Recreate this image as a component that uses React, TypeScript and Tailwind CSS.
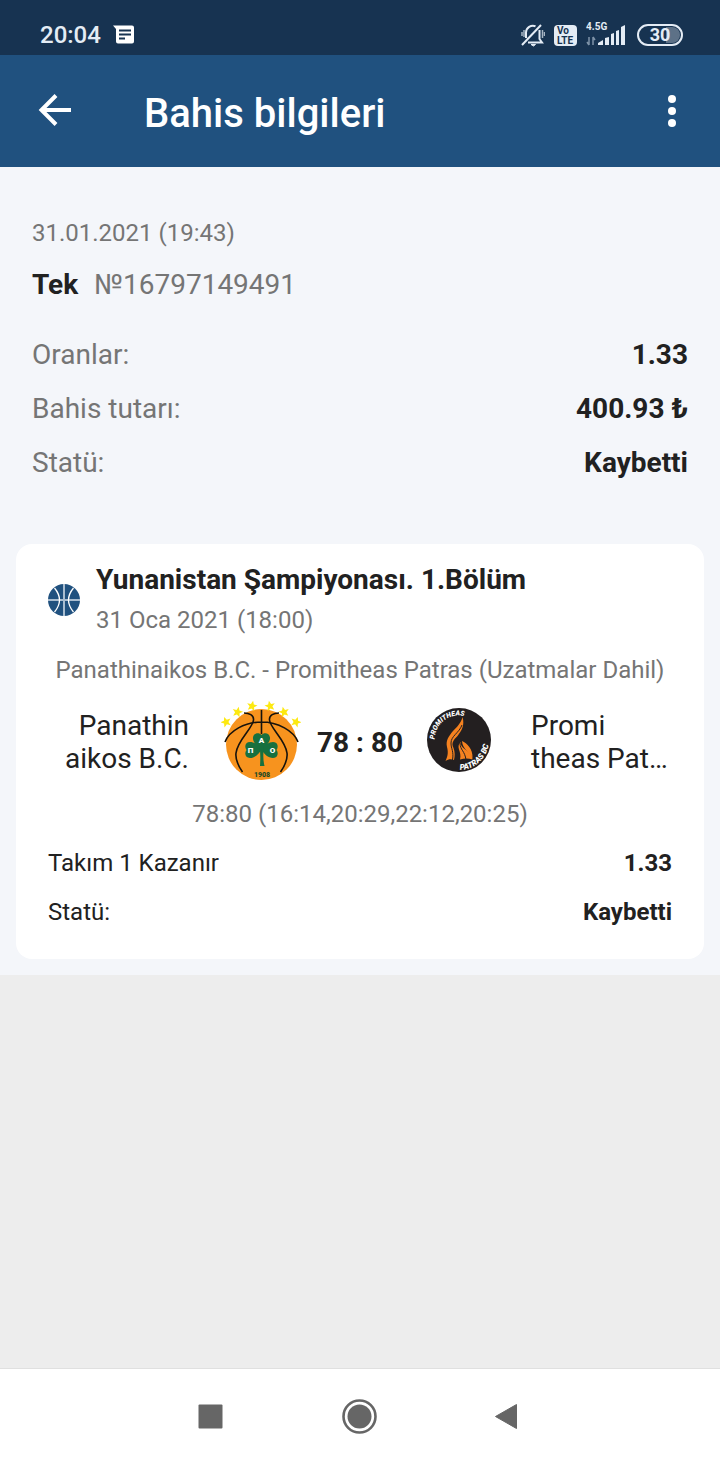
import type { ReactNode } from "react";

const details = [
  { label: "Oranlar:", value: "1.33" },
  { label: "Bahis tutarı:", value: "400.93 ₺" },
  { label: "Statü:", value: "Kaybetti" },
];

const outcome = [
  { label: "Takım 1 Kazanır", value: "1.33" },
  { label: "Statü:", value: "Kaybetti" },
];

const STAR = "M0-5.4 1.5-1.8 5.3-1.7 2.3.8 3.3 4.6 0 2.5-3.3 4.6-2.3.8-5.3-1.7-1.5-1.8Z";

const stars = [
  { x: 5, y: 22, tilt: -20 },
  { x: 16.5, y: 12, tilt: 14 },
  { x: 31, y: 6, tilt: 12 },
  { x: 49, y: 6, tilt: -12 },
  { x: 63, y: 12, tilt: -14 },
  { x: 75, y: 22, tilt: 20 },
];

function StatusBar() {
  return (
    <div className="flex h-[55px] items-center bg-[#173351] pt-3.5 pr-[37px] pl-10 text-[#e4ecf5]">
      <span className="text-2xl leading-7 font-medium">20:04</span>
      <svg className="ml-3 h-6 w-6" viewBox="0 0 24 24" fill="none">
        <path d="M0 2.500h19a2 2 0 0 1 2 2v14a2 2 0 0 1-2 2H5a2 2 0 0 1-2-2V6Z" fill="#fff" />
        <path d="M6 7.500h12M6 11.500h12M6 15.500h6" stroke="#173351" strokeWidth="2" />
      </svg>

      <div className="ml-auto flex items-center">
        <svg className="h-6 w-6" viewBox="0 0 24 24" fill="none" stroke="currentColor" strokeWidth="2">
          <path d="M5 15V9.500a7 7 0 0 1 9.500-6.300M18.500 7v9l2.500 3.500H7" />
          <path d="M1 22 20 2" />
          <path d="M1 9v4M3 7v7M21.500 7v8M23.500 9v4" strokeWidth="1.500" opacity=".7" />
          <path d="M10 21.500h4.500l-2 1.500Z" fill="currentColor" strokeWidth="1" />
        </svg>
        <svg className="ml-2 h-6 w-6" viewBox="0 0 24 24">
          <rect x="1" y="2" width="23" height="21" rx="4" fill="currentColor" />
          <g fill="#173351" fontWeight="700" fontSize="10">
            <text x="4" y="11">Vo</text>
            <text x="4" y="21">LTE</text>
          </g>
        </svg>
        <svg className="ml-2 h-7 w-11" viewBox="0 0 44 28" fill="currentColor">
          <text x="1" y="9" fontSize="10" fontWeight="700">4.5G</text>
          <path d="M4 16v8M4 24l-2-3M8 24v-8M8 16l2 3" fill="none" stroke="#7f93a8" strokeWidth="1.500" />
          <path d="M13 24v-2l5-3v5ZM20 24v-7l4-1v8ZM26 24V13l3-1v12ZM31 24V10l3-1v15ZM36 24V6l4-2v20Z" />
        </svg>
        <div className="ml-2 flex h-[22px] w-[46px] items-center justify-center rounded-full border-2 border-[#e4ecf5] bg-linear-to-r from-transparent from-65% to-[#5d7187] to-65% bg-clip-content p-px text-lg leading-5 font-bold">
          30
        </div>
      </div>
    </div>
  );
}

function Header() {
  return (
    <header className="flex h-28 items-center bg-[#20517f] px-6 text-white">
      <button type="button" aria-label="Geri" className="flex h-16 w-16 items-center justify-center">
        <svg className="h-12 w-12" viewBox="0 0 48 48" fill="none" stroke="currentColor" strokeWidth="4">
          <path d="M39 23H9.500M24 8.500 9.500 23 24 37.500" />
        </svg>
      </button>
      <h1 className="ml-14 pt-1.5 text-[40px] leading-12 font-medium">Bahis bilgileri</h1>
      <button type="button" aria-label="Menü" className="-mr-2 ml-auto flex h-16 w-16 items-center justify-center">
        <svg className="h-12 w-12" viewBox="0 0 48 48" fill="currentColor">
          <circle cx="24" cy="12" r="4" />
          <circle cx="24" cy="24" r="4" />
          <circle cx="24" cy="36" r="4" />
        </svg>
      </button>
    </header>
  );
}

function BasketballIcon() {
  return (
    <svg className="h-8 w-8 shrink-0" viewBox="0 0 32 32" fill="none">
      <circle cx="16" cy="16" r="16" fill="#20517f" />
      <path d="M16 0v32M0 16h32" stroke="#a9bdd0" strokeWidth="2" />
      <path d="M6.500 4q10 12 0 24M25.500 4q-10 12 0 24" stroke="#fff" strokeWidth="1.300" />
    </svg>
  );
}

function PanathinaikosLogo() {
  return (
    <svg className="h-20 w-20 shrink-0" viewBox="0 0 80 80" role="img" aria-label="Panathinaikos B.C.">
      <circle cx="40.500" cy="44.500" r="35.500" fill="#f7931e" />
      <g fill="none" stroke="#17130d" strokeWidth="1.600">
        <path d="M40.500 10V34M4 42C8 31 24 22 40.500 22S73 31 77 42" />
        <path d="M23 13c5 0 10 2 9.500 7-.5 8-16 20-17.500 33-1 8 3 14 6.500 19" />
        <path d="M58 13c-5 0-10 2-9.500 7 .5 8 16 20 17.500 33 1 8-3 14-6.500 19" />
      </g>
      <g fill="#17703f">
        <path d="M40.500 50C36 46 31.500 42 32 37.500c.5-4.500 6-5.500 8.500-2.500 2.500-3 8-2 8.500 2.500.5 4.500-4 8.500-8.500 12.500Z" />
        <path d="M41 49c-3 5-7 9-12 9-4.500 0-6-4.500-3.500-8-2.500-3.500-1-8 3.500-8 4 0 9 3 12 7Z" />
        <path d="M40 49c3 5 7 9 12 9 4.500 0 6-4.500 3.500-8 2.500-3.500 1-8-3.500-8-4 0-9 3-12 7Z" />
        <path d="M38.500 46h4.500c-1 8-1 14 .5 20H39c.5-7 .5-13-.5-20Z" />
      </g>
      <g fill="#fff" fontSize="8" fontWeight="900" textAnchor="middle">
        <text x="40.500" y="43">A</text>
        <text x="29.500" y="53">Π</text>
        <text x="51.500" y="53">O</text>
      </g>
      <text x="41" y="77" fill="#1d4a24" fontSize="7" fontWeight="900" textAnchor="middle">1908</text>
      {stars.map((s) => (
        <path key={s.x} d={STAR} transform={`translate(${s.x} ${s.y}) rotate(${s.tilt})`} fill="#fde910" />
      ))}
    </svg>
  );
}

function PromitheasLogo() {
  return (
    <svg className="h-20 w-20 shrink-0" viewBox="0 0 80 80" role="img" aria-label="Promitheas Patras B.C.">
      <circle cx="40" cy="40" r="32" fill="#231f20" />
      <g fill="#f58220">
        <path d="M43.500 17c2.500 8-1 14-5 19-4 4-6.500 7-4 12 1.500 4 1.500 8 .5 12-3-1-5.500-1-8.500 1 3-6 2.500-10 1.500-14-1.500-7 2-11 6-16 4-4 8-8 9.500-14Z" />
        <path d="M42 42c-1 3 1 5 5 8 4 2.500 6.500 5 6.500 9.500-4-1.500-8-1.500-12.500 0 1-4 0-7-1-10s-.5-6 2-7.500Z" />
        <path d="M43 41c5 2 11 8 10.500 17-2-6-10-8-10.500-17Z" />
      </g>
      <g fill="none" stroke="#231f20">
        <path d="M43 25c-3 8-11 11-11 18 0 6 3 8 1.500 17" />
        <path d="M41 43c0 7 5 8 6 17" />
      </g>
      <path id="crest-top" d="M15.500 39.500A24.500 24.500 0 0 1 47 16.500" fill="none" />
      <path id="crest-bottom" d="M41 70A30 30 0 0 0 70 41" fill="none" />
      <g fill="#fff" fontWeight="900" fontStyle="italic">
        <text fontSize="7">
          <textPath href="#crest-top">PROMITHEAS</textPath>
        </text>
        <text fontSize="8">
          <textPath href="#crest-bottom">PATRAS BC</textPath>
        </text>
      </g>
    </svg>
  );
}

function NavButton({ label, children }: { label: string; children: ReactNode }) {
  return (
    <button type="button" aria-label={label} className="flex h-16 w-16 items-center justify-center">
      <svg className="h-10 w-10" viewBox="0 0 40 40" fill="#666">
        {children}
      </svg>
    </button>
  );
}

export default function App() {
  return (
    <div className="flex min-h-screen flex-col bg-[#ededed] font-['Roboto',sans-serif] text-[#212121]">
      <StatusBar />
      <Header />

      <main className="bg-[#f4f6fa] px-4 pt-13 pb-4">
        <section className="px-4">
          <p className="text-2xl leading-7 text-[#757575]">31.01.2021 (19:43)</p>
          <p className="mt-5 text-[28px] leading-9">
            <span className="mr-4 font-bold">Tek</span>
            <span className="text-[#757575]">№16797149491</span>
          </p>
          <dl className="mt-[25px]">
            {details.map((row) => (
              <div key={row.label} className="flex justify-between text-[28px] leading-[54px]">
                <dt className="text-[#757575]">{row.label}</dt>
                <dd className="font-bold">{row.value}</dd>
              </div>
            ))}
          </dl>
        </section>

        {/* Maç kartı */}
        <article className="mt-[54px] rounded-2xl bg-white px-8 pt-5 pb-[22px]">
          <div className="flex items-center gap-4">
            <BasketballIcon />
            <div>
              <h2 className="text-[28px] leading-8 font-bold">Yunanistan Şampiyonası. 1.Bölüm</h2>
              <p className="mt-2 text-2xl leading-8 text-[#757575]">31 Oca 2021 (18:00)</p>
            </div>
          </div>

          <p className="mt-5 text-center text-2xl leading-7 text-[#757575]">
            Panathinaikos B.C. - Promitheas Patras (Uzatmalar Dahil)
          </p>

          <div className="mt-4 flex items-center text-[28px] leading-[33px]">
            <p className="flex-1 pt-1 text-right">
              Panathin
              <br />
              aikos B.C.
            </p>
            <div className="ml-8 flex">
              <PanathinaikosLogo />
            </div>
            <strong className="w-[118px] pt-1 text-center font-bold">78 : 80</strong>
            <div className="mr-8 flex">
              <PromitheasLogo />
            </div>
            <p className="flex-1 pt-1">
              Promi
              <br />
              theas Pat…
            </p>
          </div>

          <p className="mt-5 text-center text-2xl leading-7 text-[#757575]">78:80 (16:14,20:29,22:12,20:25)</p>

          <dl className="mt-[11px]">
            {outcome.map((row) => (
              <div key={row.label} className="flex justify-between text-2xl leading-[49px]">
                <dt>{row.label}</dt>
                <dd className="font-bold">{row.value}</dd>
              </div>
            ))}
          </dl>
        </article>
      </main>

      {/* Sistem gezinme çubuğu */}
      <nav className="mt-auto flex h-24 items-center justify-center gap-[84px] border-t border-[#e0e0e0] bg-white">
        <NavButton label="Son uygulamalar">
          <rect x="6.500" y="7.500" width="24" height="24" rx="1" />
        </NavButton>
        <NavButton label="Ana ekran">
          <circle cx="19.500" cy="19.500" r="12" />
          <circle cx="19.500" cy="19.500" r="16" fill="none" stroke="#666" strokeWidth="2.600" />
        </NavButton>
        <NavButton label="Geri dön">
          <path d="M7.500 19.500 28.500 7.500v24Z" stroke="#666" strokeWidth="1" strokeLinejoin="round" />
        </NavButton>
      </nav>
    </div>
  );
}
